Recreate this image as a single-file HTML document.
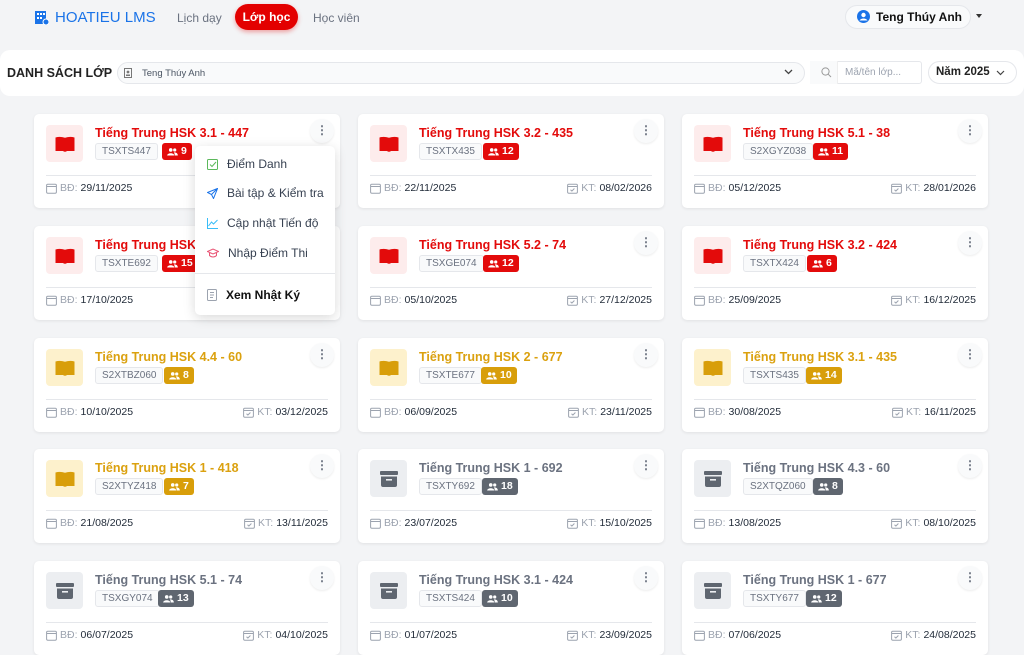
<!DOCTYPE html>
<html><head><meta charset="utf-8"><style>
*{box-sizing:border-box;margin:0;padding:0}
body{width:1024px;height:650px;overflow:hidden;background:#f3f4f6;font-family:"Liberation Sans",sans-serif;position:relative;color:#1f2937}
.abs{position:absolute}
.nav{font-size:12px;color:#6b7280;top:11px}
.card{position:absolute;width:306px;height:94px;background:#fff;border-radius:5px;box-shadow:0 1px 3px rgba(0,0,0,.08)}
.ib{position:absolute;left:12px;top:11px;width:37px;height:37px;border-radius:4px;display:flex;align-items:center;justify-content:center}
.tt{position:absolute;left:61px;top:12px;font-size:12.5px;font-weight:bold;white-space:nowrap}
.code{position:absolute;left:61px;top:29px;height:17px;padding:0 6px;border:1px solid #e5e7eb;background:#f9fafb;border-radius:3px;font-size:10px;color:#6b7280;line-height:15px}
.bd{position:absolute;top:29px;height:17px;padding:0 5px;border-radius:3px;font-size:10.5px;color:#fff;line-height:17px;font-weight:bold;display:flex;align-items:center;gap:3px}
.dv{position:absolute;left:12px;right:12px;top:61px;border-top:1px solid #e5e7eb}
.ft{position:absolute;top:68px;font-size:10.5px;color:#9ca3af;display:flex;align-items:center;gap:3px;white-space:nowrap}
.ft b{color:#1f2937;font-weight:normal}
.ft.r{right:12px}
.ft.l{left:12px}
.dots{position:absolute;left:276px;top:5px;width:24px;height:24px;border-radius:12px;background:#f9fafb;box-shadow:0 1px 2px rgba(0,0,0,.08);text-align:center;color:#6b7280;font-size:12px;line-height:22px;font-weight:bold}
.red .tt{color:#e30b0b}.red .ib{background:#fdecec}.red .bd{background:#e30b0b}
.or .tt{color:#dba10f}.or .ib{background:#fdf1cc}.or .bd{background:#d89e0a}
.gr .tt{color:#6b7280}.gr .ib{background:#eceef1}.gr .bd{background:#5f6670}
.mi{position:absolute;left:12px;font-size:12px;color:#374151;display:flex;align-items:center;gap:9px}
</style></head><body>
<svg width="0" height="0" style="position:absolute"><defs>
<symbol id="book" viewBox="0 0 20 16"><path d="M0.5 1.5 Q5 0 10 1.8 Q15 0 19.5 1.5 V15 H12 Q10 16.5 8 15 H0.5Z" fill="currentColor"/></symbol>
<symbol id="box" viewBox="0 0 20 16"><rect x="1" y="0" width="18" height="4" rx="1" fill="currentColor"/><path d="M2 5.5H18V14a2 2 0 0 1-2 2H4a2 2 0 0 1-2-2Z" fill="currentColor"/><rect x="7" y="8" width="6" height="1.6" fill="#eceef1"/></symbol>
<symbol id="ppl" viewBox="0 0 12 9"><circle cx="4" cy="2.2" r="2" fill="#fff"/><circle cx="8.5" cy="2.2" r="1.8" fill="#fff"/><path d="M0 8.5C0 5 8 5 8 8.5Z M8.5 8.5 C8.5 6.5 8 5.5 7.5 5 C10 4.8 12 6 12 8.5Z" fill="#fff"/></symbol>
<symbol id="cal" viewBox="0 0 11 11"><rect x="0.6" y="1.2" width="9.8" height="9" rx="1.2" fill="none" stroke="#9ca3af" stroke-width="1"/><path d="M0.6 3.5H10.4" stroke="#9ca3af"/></symbol>
<symbol id="calc" viewBox="0 0 11 11"><rect x="0.6" y="1.2" width="9.8" height="9" rx="1.2" fill="none" stroke="#9ca3af" stroke-width="1"/><path d="M0.6 3.5H10.4" stroke="#9ca3af"/><path d="M3.5 6.7l1.4 1.3 2.5-2.5" stroke="#9ca3af" fill="none"/></symbol>
</defs></svg>

<!-- header -->
<svg class="abs" style="left:35px;top:10px" width="14" height="15" viewBox="0 0 14 15"><rect x="0" y="1" width="11" height="13" fill="#1a73e8"/><g fill="#fff"><rect x="2" y="3" width="2" height="2"/><rect x="5" y="3" width="2" height="2"/><rect x="8" y="3" width="2" height="2"/><rect x="2" y="7" width="2" height="2"/><rect x="5" y="7" width="2" height="2"/></g><circle cx="11" cy="12" r="3" fill="#1a73e8" stroke="#fff"/></svg>
<div class="abs" style="left:55px;top:9px;font-size:15px;color:#1a73e8">HOATIEU LMS</div>
<div class="abs nav" style="left:177px">Lịch dạy</div>
<div class="abs" style="left:235px;top:4px;width:63px;height:26px;border-radius:13px;background:#e30000;color:#fff;font-size:12px;font-weight:bold;text-align:center;line-height:26px;box-shadow:0 2px 5px rgba(227,0,0,.35)">Lớp học</div>
<div class="abs nav" style="left:313px">Học viên</div>
<div class="abs" style="left:845px;top:5px;width:126px;height:24px;border-radius:12px;border:1px solid #e5e7eb;background:#f9fafb"></div>
<svg class="abs" style="left:857px;top:10px" width="13" height="13" viewBox="0 0 13 13"><circle cx="6.5" cy="6.5" r="6.5" fill="#1a73e8"/><circle cx="6.5" cy="5" r="2.2" fill="#fff"/><path d="M2.5 10.5C4 7.8 9 7.8 10.5 10.5" fill="#fff"/></svg>
<div class="abs" style="left:876px;top:10px;font-size:12px;font-weight:bold;color:#111">Teng Thúy Anh</div>
<div class="abs" style="left:976px;top:14px;border-left:3px solid transparent;border-right:3px solid transparent;border-top:4px solid #333"></div>

<!-- toolbar -->
<div class="abs" style="left:0;top:50px;width:1024px;height:46px;background:#fff;border-radius:10px"></div>
<div class="abs" style="left:7px;top:66px;font-size:12.5px;font-weight:bold;color:#222">DANH SÁCH LỚP</div>
<div class="abs" style="left:117px;top:62px;width:688px;height:22px;border:1px solid #e5e7eb;border-radius:11px;background:#f9fafb"></div>
<svg class="abs" style="left:124px;top:68px" width="8" height="10" viewBox="0 0 8 10"><rect x="0.5" y="0.5" width="7" height="9" fill="none" stroke="#777"/><circle cx="4" cy="4" r="1.4" fill="#777"/><rect x="2" y="6.5" width="4" height="1.5" fill="#777"/></svg>
<div class="abs" style="left:142px;top:68px;font-size:9.5px;color:#4b5563">Teng Thúy Anh</div>
<svg class="abs" style="left:784px;top:69px" width="9" height="6" viewBox="0 0 9 6"><path d="M1 1l3.5 3.5L8 1" stroke="#444" fill="none" stroke-width="1.3"/></svg>
<div class="abs" style="left:810px;top:61px;width:112px;height:23px;border:1px solid #e5e7eb;border-radius:3px"></div>
<div class="abs" style="left:810px;top:61px;width:28px;height:23px;background:#f9fafb;border-right:1px solid #eee"></div>
<svg class="abs" style="left:821px;top:67px" width="11" height="11" viewBox="0 0 11 11"><circle cx="4.5" cy="4.5" r="3.6" stroke="#999" fill="none"/><path d="M7.2 7.2L10 10" stroke="#999"/></svg>
<div class="abs" style="left:845px;top:67px;font-size:10px;color:#9ca3af">Mã/tên lớp...</div>
<div class="abs" style="left:928px;top:61px;width:89px;height:23px;border:1px solid #e5e7eb;border-radius:12px"></div>
<div class="abs" style="left:936px;top:66px;font-size:11.5px;font-weight:bold;color:#222">Năm 2025</div>
<svg class="abs" style="left:996px;top:70px" width="9" height="6" viewBox="0 0 9 6"><path d="M1 1l3.5 3.5L8 1" stroke="#444" fill="none" stroke-width="1.2"/></svg>

<!-- cards -->
<div class="card red" style="left:34px;top:114px"><div class="ib"><svg width="20" height="16" style="color:#e30b0b"><use href="#book"/></svg></div><div class="tt">Tiếng Trung HSK 3.1 - 447</div><div class="code">TSXTS447</div><div class="bd" style="left:128px"><svg width="11" height="8"><use href="#ppl"/></svg>9</div><div class="dots">⋮</div><div class="dv"></div><div class="ft l"><svg width="11" height="11"><use href="#cal"/></svg>BĐ: <b>29/11/2025</b></div></div>
<div class="card red" style="left:358px;top:114px"><div class="ib"><svg width="20" height="16" style="color:#e30b0b"><use href="#book"/></svg></div><div class="tt">Tiếng Trung HSK 3.2 - 435</div><div class="code">TSXTX435</div><div class="bd" style="left:125px"><svg width="11" height="8"><use href="#ppl"/></svg>12</div><div class="dots">⋮</div><div class="dv"></div><div class="ft l"><svg width="11" height="11"><use href="#cal"/></svg>BĐ: <b>22/11/2025</b></div><div class="ft r"><svg width="11" height="11"><use href="#calc"/></svg>KT: <b>08/02/2026</b></div></div>
<div class="card red" style="left:682px;top:114px"><div class="ib"><svg width="20" height="16" style="color:#e30b0b"><use href="#book"/></svg></div><div class="tt">Tiếng Trung HSK 5.1 - 38</div><div class="code">S2XGYZ038</div><div class="bd" style="left:131px"><svg width="11" height="8"><use href="#ppl"/></svg>11</div><div class="dots">⋮</div><div class="dv"></div><div class="ft l"><svg width="11" height="11"><use href="#cal"/></svg>BĐ: <b>05/12/2025</b></div><div class="ft r"><svg width="11" height="11"><use href="#calc"/></svg>KT: <b>28/01/2026</b></div></div>

<div class="card red" style="left:34px;top:226px"><div class="ib"><svg width="20" height="16" style="color:#e30b0b"><use href="#book"/></svg></div><div class="tt">Tiếng Trung HSK 1.1 - 692</div><div class="code">TSXTE692</div><div class="bd" style="left:128px"><svg width="11" height="8"><use href="#ppl"/></svg>15</div><div class="dv"></div><div class="ft l"><svg width="11" height="11"><use href="#cal"/></svg>BĐ: <b>17/10/2025</b></div></div>
<div class="card red" style="left:358px;top:226px"><div class="ib"><svg width="20" height="16" style="color:#e30b0b"><use href="#book"/></svg></div><div class="tt">Tiếng Trung HSK 5.2 - 74</div><div class="code">TSXGE074</div><div class="bd" style="left:125px"><svg width="11" height="8"><use href="#ppl"/></svg>12</div><div class="dots">⋮</div><div class="dv"></div><div class="ft l"><svg width="11" height="11"><use href="#cal"/></svg>BĐ: <b>05/10/2025</b></div><div class="ft r"><svg width="11" height="11"><use href="#calc"/></svg>KT: <b>27/12/2025</b></div></div>
<div class="card red" style="left:682px;top:226px"><div class="ib"><svg width="20" height="16" style="color:#e30b0b"><use href="#book"/></svg></div><div class="tt">Tiếng Trung HSK 3.2 - 424</div><div class="code">TSXTX424</div><div class="bd" style="left:125px"><svg width="11" height="8"><use href="#ppl"/></svg>6</div><div class="dots">⋮</div><div class="dv"></div><div class="ft l"><svg width="11" height="11"><use href="#cal"/></svg>BĐ: <b>25/09/2025</b></div><div class="ft r"><svg width="11" height="11"><use href="#calc"/></svg>KT: <b>16/12/2025</b></div></div>

<div class="card or" style="left:34px;top:338px"><div class="ib"><svg width="20" height="16" style="color:#d89e0a"><use href="#book"/></svg></div><div class="tt">Tiếng Trung HSK 4.4 - 60</div><div class="code">S2XTBZ060</div><div class="bd" style="left:130px"><svg width="11" height="8"><use href="#ppl"/></svg>8</div><div class="dots">⋮</div><div class="dv"></div><div class="ft l"><svg width="11" height="11"><use href="#cal"/></svg>BĐ: <b>10/10/2025</b></div><div class="ft r"><svg width="11" height="11"><use href="#calc"/></svg>KT: <b>03/12/2025</b></div></div>
<div class="card or" style="left:358px;top:338px"><div class="ib"><svg width="20" height="16" style="color:#d89e0a"><use href="#book"/></svg></div><div class="tt">Tiếng Trung HSK 2 - 677</div><div class="code">TSXTE677</div><div class="bd" style="left:123px"><svg width="11" height="8"><use href="#ppl"/></svg>10</div><div class="dots">⋮</div><div class="dv"></div><div class="ft l"><svg width="11" height="11"><use href="#cal"/></svg>BĐ: <b>06/09/2025</b></div><div class="ft r"><svg width="11" height="11"><use href="#calc"/></svg>KT: <b>23/11/2025</b></div></div>
<div class="card or" style="left:682px;top:338px"><div class="ib"><svg width="20" height="16" style="color:#d89e0a"><use href="#book"/></svg></div><div class="tt">Tiếng Trung HSK 3.1 - 435</div><div class="code">TSXTS435</div><div class="bd" style="left:124px"><svg width="11" height="8"><use href="#ppl"/></svg>14</div><div class="dots">⋮</div><div class="dv"></div><div class="ft l"><svg width="11" height="11"><use href="#cal"/></svg>BĐ: <b>30/08/2025</b></div><div class="ft r"><svg width="11" height="11"><use href="#calc"/></svg>KT: <b>16/11/2025</b></div></div>

<div class="card or" style="left:34px;top:449px"><div class="ib"><svg width="20" height="16" style="color:#d89e0a"><use href="#book"/></svg></div><div class="tt">Tiếng Trung HSK 1 - 418</div><div class="code">S2XTYZ418</div><div class="bd" style="left:130px"><svg width="11" height="8"><use href="#ppl"/></svg>7</div><div class="dots">⋮</div><div class="dv"></div><div class="ft l"><svg width="11" height="11"><use href="#cal"/></svg>BĐ: <b>21/08/2025</b></div><div class="ft r"><svg width="11" height="11"><use href="#calc"/></svg>KT: <b>13/11/2025</b></div></div>
<div class="card gr" style="left:358px;top:449px"><div class="ib"><svg width="20" height="16" style="color:#5f6670"><use href="#box"/></svg></div><div class="tt">Tiếng Trung HSK 1 - 692</div><div class="code">TSXTY692</div><div class="bd" style="left:124px"><svg width="11" height="8"><use href="#ppl"/></svg>18</div><div class="dots">⋮</div><div class="dv"></div><div class="ft l"><svg width="11" height="11"><use href="#cal"/></svg>BĐ: <b>23/07/2025</b></div><div class="ft r"><svg width="11" height="11"><use href="#calc"/></svg>KT: <b>15/10/2025</b></div></div>
<div class="card gr" style="left:682px;top:449px"><div class="ib"><svg width="20" height="16" style="color:#5f6670"><use href="#box"/></svg></div><div class="tt">Tiếng Trung HSK 4.3 - 60</div><div class="code">S2XTQZ060</div><div class="bd" style="left:131px"><svg width="11" height="8"><use href="#ppl"/></svg>8</div><div class="dots">⋮</div><div class="dv"></div><div class="ft l"><svg width="11" height="11"><use href="#cal"/></svg>BĐ: <b>13/08/2025</b></div><div class="ft r"><svg width="11" height="11"><use href="#calc"/></svg>KT: <b>08/10/2025</b></div></div>

<div class="card gr" style="left:34px;top:561px"><div class="ib"><svg width="20" height="16" style="color:#5f6670"><use href="#box"/></svg></div><div class="tt">Tiếng Trung HSK 5.1 - 74</div><div class="code">TSXGY074</div><div class="bd" style="left:124px"><svg width="11" height="8"><use href="#ppl"/></svg>13</div><div class="dots">⋮</div><div class="dv"></div><div class="ft l"><svg width="11" height="11"><use href="#cal"/></svg>BĐ: <b>06/07/2025</b></div><div class="ft r"><svg width="11" height="11"><use href="#calc"/></svg>KT: <b>04/10/2025</b></div></div>
<div class="card gr" style="left:358px;top:561px"><div class="ib"><svg width="20" height="16" style="color:#5f6670"><use href="#box"/></svg></div><div class="tt">Tiếng Trung HSK 3.1 - 424</div><div class="code">TSXTS424</div><div class="bd" style="left:124px"><svg width="11" height="8"><use href="#ppl"/></svg>10</div><div class="dots">⋮</div><div class="dv"></div><div class="ft l"><svg width="11" height="11"><use href="#cal"/></svg>BĐ: <b>01/07/2025</b></div><div class="ft r"><svg width="11" height="11"><use href="#calc"/></svg>KT: <b>23/09/2025</b></div></div>
<div class="card gr" style="left:682px;top:561px"><div class="ib"><svg width="20" height="16" style="color:#5f6670"><use href="#box"/></svg></div><div class="tt">Tiếng Trung HSK 1 - 677</div><div class="code">TSXTY677</div><div class="bd" style="left:124px"><svg width="11" height="8"><use href="#ppl"/></svg>12</div><div class="dots">⋮</div><div class="dv"></div><div class="ft l"><svg width="11" height="11"><use href="#cal"/></svg>BĐ: <b>07/06/2025</b></div><div class="ft r"><svg width="11" height="11"><use href="#calc"/></svg>KT: <b>24/08/2025</b></div></div>

<!-- dropdown menu -->
<div class="abs" style="left:195px;top:146px;width:140px;height:169px;background:#fff;border-radius:5px;box-shadow:0 3px 12px rgba(0,0,0,.15)">
<div class="mi" style="top:11px"><svg width="11" height="11" viewBox="0 0 11 11"><rect x="0.5" y="0.5" width="10" height="10" rx="1" fill="none" stroke="#5cb85c"/><path d="M3 5.5l2 2 4-4.5" stroke="#5cb85c" fill="none"/></svg>Điểm Danh</div>
<div class="mi" style="top:40px"><svg width="11" height="11" viewBox="0 0 11 11"><path d="M10.5 0.5L0.5 4.5 4.5 6.5 6.5 10.5Z M4.5 6.5L10.5 0.5" stroke="#1a73e8" fill="none"/></svg>Bài tập &amp; Kiểm tra</div>
<div class="mi" style="top:70px"><svg width="11" height="11" viewBox="0 0 11 11"><path d="M0.5 0v10.5H11 M1.5 8l3-4 2 2 4-4" stroke="#38bdf8" fill="none"/></svg>Cập nhật Tiến độ</div>
<div class="mi" style="top:100px"><svg width="12" height="10" viewBox="0 0 12 10"><path d="M0.5 3.5L6 1l5.5 2.5L6 6Z M2.5 4.5v3c2 2 5 2 7 0v-3" stroke="#e11d48" fill="none" opacity=".75"/></svg>Nhập Điểm Thi</div>
<div style="position:absolute;left:0;right:0;top:127px;border-top:1px solid #e5e7eb"></div>
<div class="mi" style="top:142px;font-weight:bold;color:#111"><svg width="10" height="12" viewBox="0 0 10 12"><rect x="0.5" y="0.5" width="9" height="11" rx="1" fill="none" stroke="#9ca3af"/><path d="M3 3.5h4M3 6h4M3 8.5h3" stroke="#9ca3af"/></svg>Xem Nhật Ký</div>
</div>
</body></html>
